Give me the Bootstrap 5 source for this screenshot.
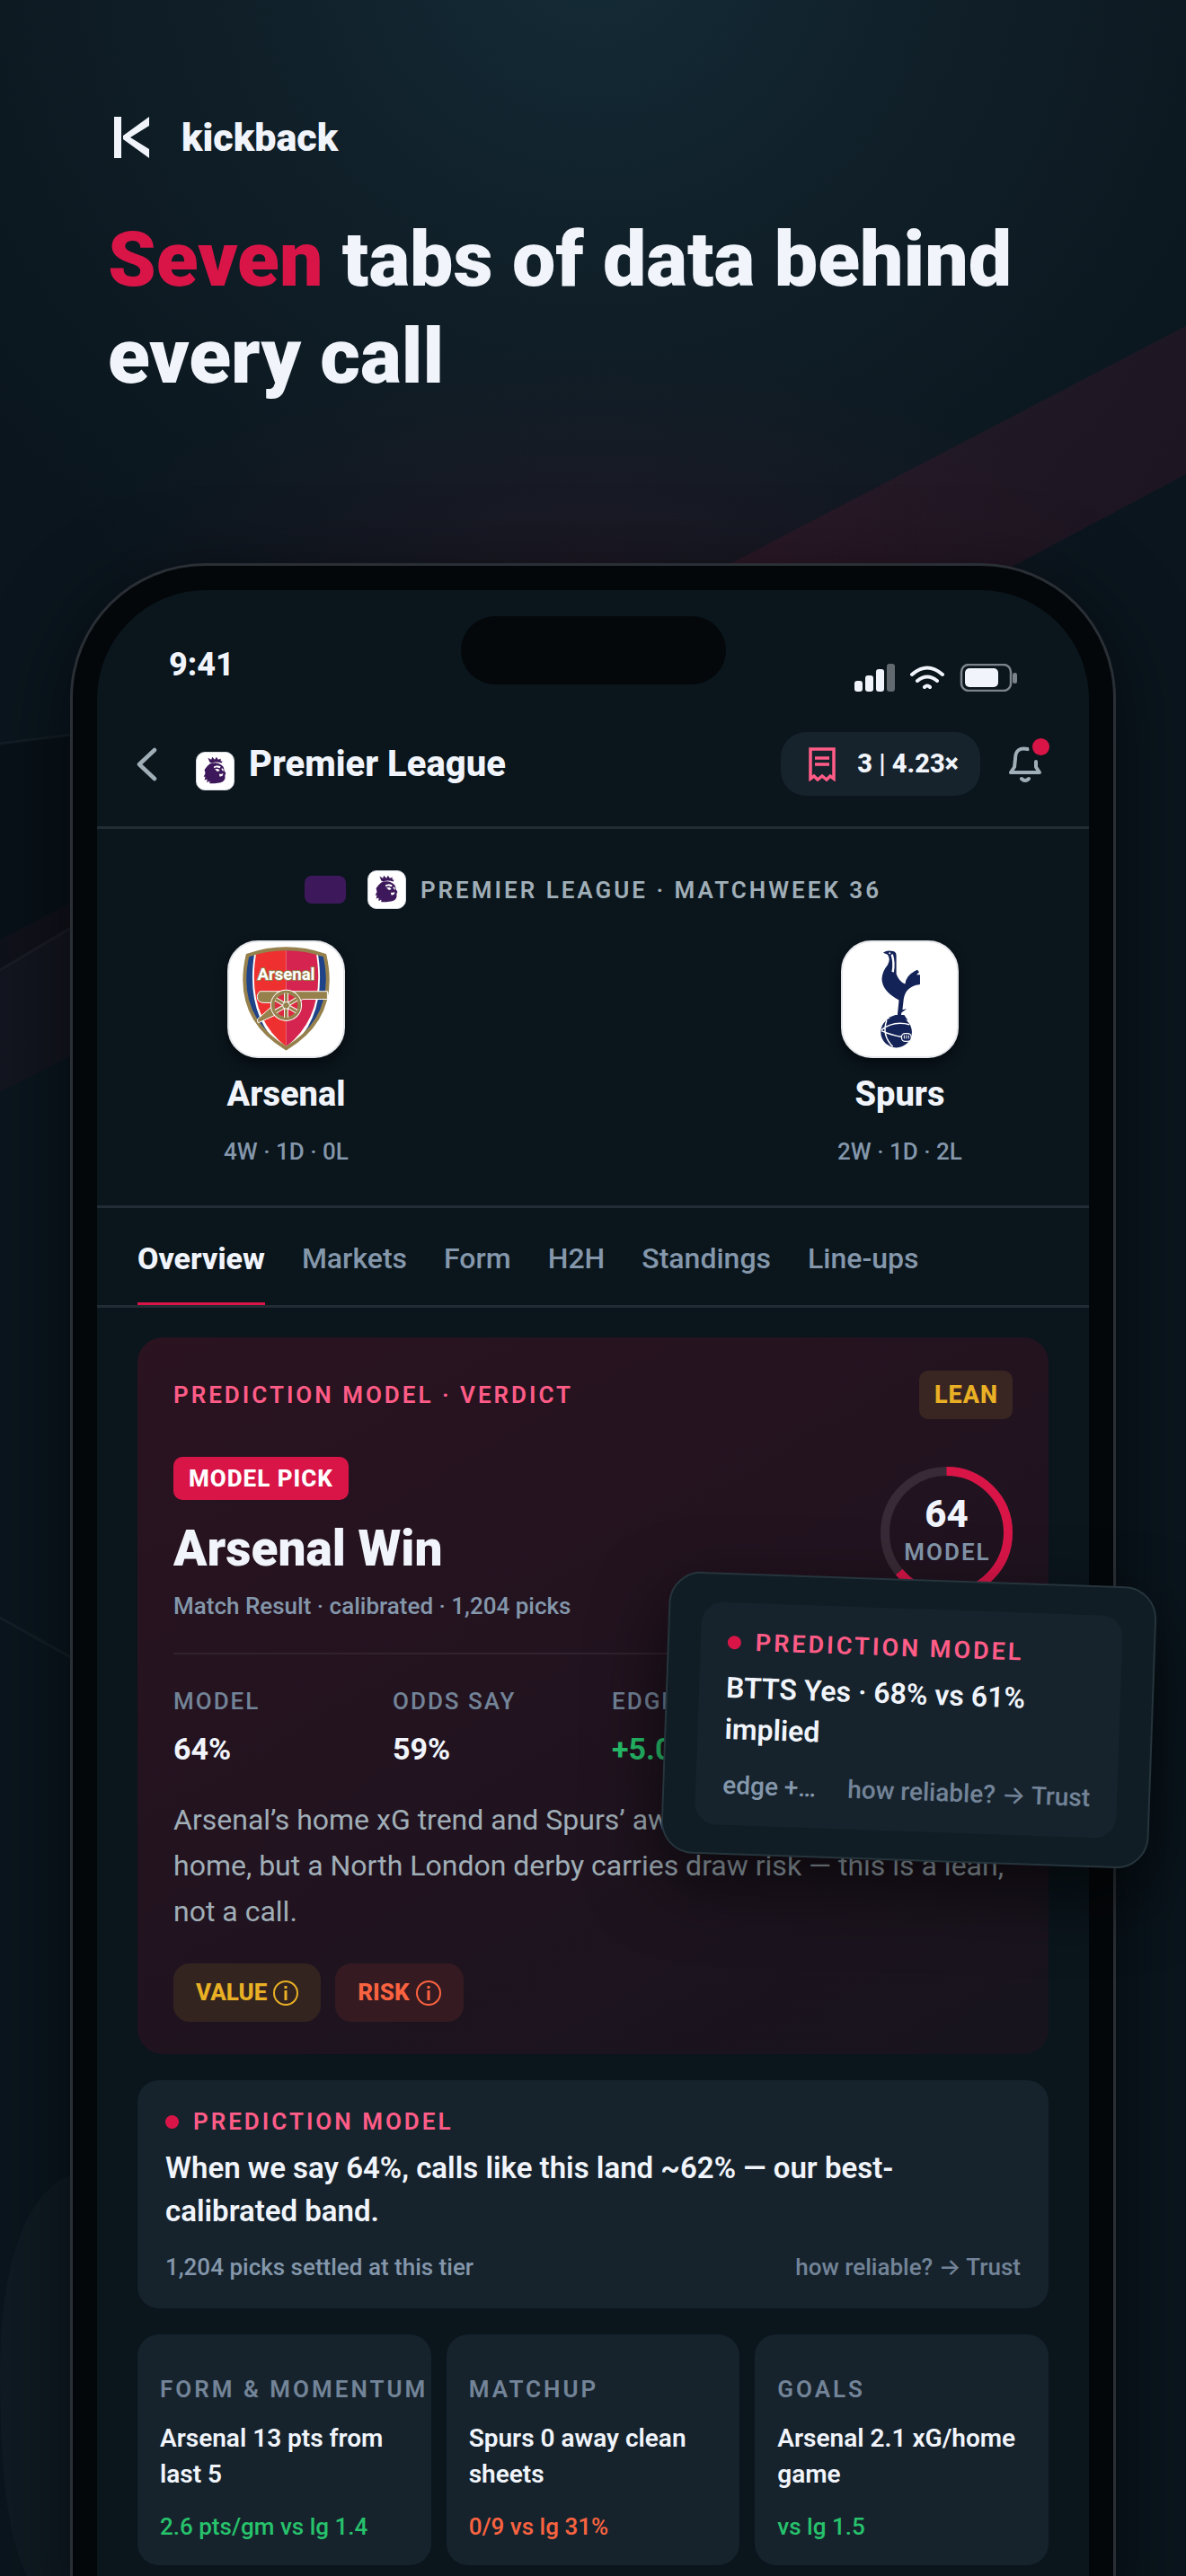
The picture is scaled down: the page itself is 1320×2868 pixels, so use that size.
<!DOCTYPE html>
<html lang="en">
<head>
<meta charset="utf-8">
<meta name="viewport" content="width=device-width, initial-scale=1">
<title>kickback – Seven tabs of data behind every call</title>
<link href="https://cdn.jsdelivr.net/npm/bootstrap@5.3.0/dist/css/bootstrap.min.css" rel="stylesheet">
<style>
:root{--ink:#f1f5fb;--soft:#a0aeb7;--muted:#8497ab;--dim:#738498;--brand:#d91548;--pink:#ff5c87;--screen:#0a151c;--tile:#16232d;--rule:#212c34;--gold:#e9b025;--risk:#fb6340;--up:#27c26c}
body{height:100vh;overflow:hidden;background:#09121a;color:var(--ink);font-family:Roboto,Inter,"Liberation Sans",sans-serif}
.poster{position:relative;min-height:100vh;background:
 radial-gradient(560px 260px at 50% 640px,rgba(217,21,72,.08),transparent 100%),
 radial-gradient(900px 860px at 50% -60px,#142b37 0%,#101f28 45%,#0a151d 100%)}
.backdrop{position:absolute;inset:0 0 auto;width:100%;height:auto}
.hero,.phone{position:relative}
.hero{padding:126px 120px 0}
.brand{height:54px;gap:34px;padding-left:6px}
.wordmark{font-size:43px;font-weight:900;line-height:54px}
.headline{font-size:86px;font-weight:900;line-height:108px;margin:55px 0 0}
.headline span{color:var(--brand)}
.phone{margin:176px 78px 0;border:3px solid #2a2f36;border-bottom:0;border-radius:150px 150px 0 0;background:#04070a;padding:27px 27px 0;flex:1 0 auto;box-shadow:0 20px 90px rgba(0,0,0,.5)}
.screen{background:var(--screen);border-radius:121px 121px 0 0;height:100%}
.statusbar{display:grid;grid-template-columns:1fr auto 1fr;align-items:start;padding:29px 79px 11px 80px}
.clock{font-size:36px;font-weight:800;line-height:40px;margin-top:34px}
.island{width:295px;height:76px;border-radius:38px;background:#04080b}
.statusicons{margin-top:53px;gap:16px}
.topbar{padding:34px 45px 34px 44px;border-bottom:3px solid var(--rule)}
.plain{background:none;border:0;padding:0;display:block;position:relative}
.back{margin-right:42px}
.leaguechip{width:43px;height:43px;border-radius:10px;background:#fff;border:1px solid #d8dce2;flex:none}
.leaguename{font-size:40px;font-weight:800;line-height:56px;margin:0}
.slip{height:71px;border:0;border-radius:28px;background:var(--tile);color:var(--ink);padding:0 24px 0 31px;gap:24px;font-size:29px;font-weight:800}
.reddot{position:absolute;width:19px;height:19px;border:0;border-radius:50%;background:var(--brand);top:-8px;right:-9px;box-shadow:0 0 0 4px var(--screen)}
.fixture{padding:46px 44px 42px;border-bottom:3px solid var(--rule)}
.caps{font-size:26px;line-height:36px;letter-spacing:3px;font-weight:600}
.swatch{width:46px;height:31px;border-radius:8px;background:#3d195b}
.sides{display:grid;grid-template-columns:1fr 350px 1fr;margin-top:35px}
.crest{width:131px;height:131px;border-radius:34px;background:#fff;border:2px solid #e6e8ec;box-shadow:0 6px 14px rgba(0,0,0,.45);display:block}
.sidename{font-size:38px;font-weight:800;line-height:48px;margin:16px 0 22px}
.fine{font-size:26px;line-height:36px;font-weight:500;color:var(--muted)}
.tabs{gap:41px;padding:0 45px;border-bottom:3px solid var(--rule)}
.tabs a{color:var(--muted);text-decoration:none;font-size:32px;line-height:48px;font-weight:500;padding:32px 0 25px;border-bottom:3px solid transparent}
.tabs a.active{color:var(--ink);font-size:34px;font-weight:800;border-color:var(--brand)}
.content{padding:33px 45px 60px}
.verdict{position:relative;border-radius:28px;padding:37px 40px 36px;background:linear-gradient(150deg,#2b1320 0%,#20131f 55%,#17141d 100%)}
.tag{border-radius:10px;font-weight:800;letter-spacing:1px}
.tag-lean{background:#392622;color:var(--gold);font-size:27px;line-height:54px;padding:0 16px 0 17px}
.tag-pick{background:var(--brand);color:#fff;font-size:26px;line-height:48px;padding:0 17px;display:inline-block}
.pickrow{margin-top:42px}
.picktitle{font-size:55px;font-weight:900;line-height:68px;margin:20px 0 12px}
.ring{position:relative;width:147px;height:147px;margin-top:11px}
.ring svg{display:block}
.ringtext{position:absolute;inset:29px 0 0}
.ringnum{font-size:42px;font-weight:800;line-height:48px}
.ringcap{font-size:26px;line-height:36px;letter-spacing:2px;font-weight:600;color:var(--muted);padding-left:2px}
.figures{display:grid;grid-template-columns:repeat(4,1fr);column-gap:42px;margin:34px 0 0;padding-top:36px;border-top:2px solid #30222e}
.figures dt{font-size:26px;line-height:32px;letter-spacing:2px;font-weight:500;color:var(--dim)}
.figures dd{font-size:34px;line-height:44px;font-weight:700;margin:15px 0 0}
.why{font-size:32px;line-height:51px;color:var(--soft);margin:32px 0}
.flag{height:65px;border:0;border-radius:18px;font-size:26px;font-weight:800;padding:0 25px;gap:7px}
.flag-value{background:#332420;color:var(--gold)}
.flag-risk{background:#351b21;color:var(--risk)}
.panel{background:var(--tile);border-radius:24px;padding:28px 31px;margin-top:29px}
.dot{width:15px;height:15px;border-radius:50%;background:var(--brand);flex:none}
.claim{font-size:33px;line-height:48px;font-weight:600;margin:10px 0 20px}
.more{color:var(--dim);text-decoration:none;white-space:nowrap}
.trio{display:grid;grid-template-columns:repeat(3,1fr);gap:17px;margin-top:29px}
.fact{background:var(--tile);border-radius:24px;padding:43px 25px 25px;overflow:hidden}
.fact h3{color:var(--dim);white-space:nowrap;margin:0}
.fact p{font-size:28px;line-height:40px;font-weight:600;margin:17px 0 20px}
.popout{position:absolute;top:269px;right:-116px;width:543px;padding:31px 35px;border:2px solid #26343c;border-radius:36px;background:#101d25;transform:rotate(2deg);box-shadow:0 30px 80px rgba(0,0,0,.6)}
.popout .panel{margin:0;padding:26px 30px}
.popout .claim{font-size:32px;line-height:46px;margin:10px 0 22px}
.popout .caps{font-size:27px}
.popout .fine{font-size:28px}
</style>
</head>
<body>
<main class="poster d-flex flex-column">
<svg class="backdrop" viewBox="0 0 1320 2868" aria-hidden="true">
 <defs><linearGradient id="beam" x1="1320" y1="0" x2="0" y2="0" gradientUnits="userSpaceOnUse"><stop offset="0" stop-color="#d91548" stop-opacity=".09"/><stop offset=".35" stop-color="#d91548" stop-opacity=".1"/><stop offset="1" stop-color="#d91548" stop-opacity=".04"/></linearGradient></defs>
 <path d="M1320 363 812 628 0 1046V1216L1132 628 1320 528Z" fill="url(#beam)"/>
 <path d="M0 828 80 818V1032L0 1080Z" fill="#000" opacity=".15"/>
 <path d="M0 828 80 818M0 1080 80 1032M0 1801 80 1846" stroke="#fff" stroke-opacity=".04" stroke-width="3" fill="none"/>
 <path d="M90 2418C30 2430 0 2520 0 2640S10 2830 30 2868H90Z" fill="#fff" opacity=".022"/>
</svg>
<header class="hero">
 <div class="brand d-flex align-items-center">
  <svg width="42" height="46" viewBox="0 0 42 46" fill="#f1f5fb" aria-hidden="true"><path d="M1 0h8v46H1zM40 0v10L19 23l21 13v10L11 25v-4z"/></svg>
  <span class="wordmark">kickback</span>
 </div>
 <h1 class="headline"><span>Seven</span> tabs of data behind every call</h1>
</header>

<section class="phone">
<div class="screen">
 <div class="statusbar">
  <div class="clock">9:41</div>
  <div class="island"></div>
  <div class="statusicons d-flex justify-content-end align-items-center">
   <svg width="45" height="31" viewBox="0 0 45 31" fill="#f1f5fb" aria-hidden="true"><rect y="19" width="9" height="12" rx="3"/><rect x="12" y="13" width="9" height="18" rx="3"/><rect x="24" y="6" width="9" height="25" rx="3"/><rect x="36" width="9" height="31" rx="3" opacity=".38"/></svg>
   <svg width="40" height="27" viewBox="0 0 40 27" fill="none" stroke="#f1f5fb" stroke-width="4" stroke-linecap="round" aria-hidden="true"><path d="M3 10Q20-5 37 10M9 17Q20 8 31 17M17 24Q20 21 23 24"/></svg>
   <svg width="65" height="31" viewBox="0 0 65 31" fill="none" aria-hidden="true"><rect x="2" y="1" width="55" height="29" rx="8" stroke="#7c838a" stroke-width="2.5"/><rect x="6" y="5" width="37" height="21" rx="5" fill="#f1f5fb"/><rect x="59" y="10" width="5" height="12" rx="2.5" fill="#7c838a"/></svg>
  </div>
 </div>

 <div class="topbar d-flex justify-content-between align-items-center">
  <div class="d-flex align-items-center">
   <button class="plain back" aria-label="Back"><svg width="24" height="38" viewBox="0 0 24 38" fill="none" stroke="#a0aeb7" stroke-width="4.5" stroke-linecap="round" stroke-linejoin="round" class="d-block"><path d="M20 3 3 19l17 16"/></svg></button>
   <svg class="leaguechip mt-3 me-3" viewBox="0 0 43 43" role="img" aria-label="Premier League crest"><g id="lion"><path fill="#3d195b" d="M15 11l-2-5 4 2 1-3 3 3 2-3 2 3 3-1 0 3 2 0-1 2q-6-2-12 0zM15 13q8-3 13 1 4 2 4 7l2 3-1 2 0 4q-1 4-5 5l-7 1-6 0 0-3-3 2 0-4-3 1 1-4-2 0 2-4-1-4 3-4z"/><path fill="#fff" d="M20 16l4-1 4 1-1 2-4-1-3 1zM21 19l4 0 2 2-3 1zM29 18l2 1 0 3-2-2zM26 25l3 0 2-1-1 3-3 1z"/></g></svg>
   <h2 class="leaguename">Premier League</h2>
  </div>
  <div class="d-flex align-items-center">
   <button class="slip d-flex align-items-center me-4">
    <svg width="30" height="38" viewBox="0 0 30 38" fill="none" stroke="#ff5c87" stroke-width="3.5" aria-hidden="true"><path d="M2 2h26v33l-4-3-4 4-5-4-5 4-4-4-4 3zM7 12h16M7 19h16"/></svg>
    <span>3 | 4.23×</span>
   </button>
   <button class="plain ms-2 me-2" aria-label="Notifications"><svg width="36" height="42" viewBox="0 0 36 42" fill="none" stroke="#a0aeb7" stroke-width="4" stroke-linecap="round" stroke-linejoin="round" class="d-block"><path d="M21 4Q7 1 7 15L6 24 2 30H34L30 24V18M14 37q4 4 8 0"/></svg><span class="reddot"></span></button>
  </div>
 </div>

 <div class="fixture">
  <div class="d-flex justify-content-center align-items-center">
   <span class="swatch"></span>
   <svg class="leaguechip ms-4 me-3" viewBox="0 0 43 43" aria-hidden="true"><use href="#lion"/></svg>
   <span class="caps" style="color:var(--soft)">PREMIER LEAGUE · MATCHWEEK 36</span>
  </div>
  <div class="sides text-center">
   <div class="d-flex flex-column align-items-center">
    <svg class="crest" viewBox="0 0 130 130" role="img" aria-label="Arsenal crest">
     <defs><clipPath id="shield"><path d="M21 15Q65 0 109 15 125 85 65 121 5 85 21 15z"/></clipPath></defs>
     <g clip-path="url(#shield)"><path fill="#1f4389" d="M0 0h130v130H0z"/><path fill="#fff" d="M30 6H100Q115 85 65 125 15 85 30 6z"/><path fill="#ee3130" d="M32 6H65V119Q17 82 32 6z"/><path fill="#d4244f" d="M65 6H98Q113 82 65 119z"/></g>
     <path d="M21 15Q65 0 109 15 125 85 65 121 5 85 21 15z" fill="none" stroke="#96814d" stroke-width="4"/>
     <g stroke="#fff" stroke-width="1" fill="#96814d"><path d="M35 56H112V65H84L78 69H40Q32 69 32 62q0-3 3-6z"/><path d="M50 72L32 88l1 4 22-10z"/></g>
     <circle cx="65" cy="72" r="18" fill="#fff"/><circle cx="65" cy="72" r="15" fill="#dc2a40" stroke="#96814d" stroke-width="4"/>
     <path d="M65 58V86M53 65 77 79M53 79 77 65" stroke="#fff" stroke-width="5"/><path d="M65 58V86M53 65 77 79M53 79 77 65" stroke="#96814d" stroke-width="3"/><circle cx="65" cy="72" r="4" fill="#96814d" stroke="#fff"/>
     <text x="65" y="43" text-anchor="middle" font-family="Roboto,sans-serif" font-weight="700" font-size="19" fill="#fff" stroke="#96814d" stroke-width="2" paint-order="stroke">Arsenal</text>
    </svg>
    <h3 class="sidename">Arsenal</h3>
    <div class="fine">4W · 1D · 0L</div>
   </div>
   <div></div>
   <div class="d-flex flex-column align-items-center">
    <svg class="crest" viewBox="0 0 130 130" role="img" aria-label="Spurs crest">
     <path fill="#132257" d="M46 12Q50 9 55 10 61 10 61 15V36Q64 45 71 47.500 72 37 85 31.500L87 34 84 37 88 37 88 48Q70 50 69 68L68 77 73 76 67 80 66 86H62L64 66Q45 56 44.500 42 45 33 51 26 55 19 51 14z"/>
     <path fill="none" stroke="#fff" stroke-width="2.500" d="M56 14Q59 24 57 34"/><circle cx="53.500" cy="12.500" r="1" fill="#fff"/>
     <circle cx="61" cy="102.500" r="17.700" fill="#132257"/><path fill="#132257" d="M52 86l8-3h10l4 6z"/>
     <path fill="none" stroke="#fff" stroke-width="1.500" d="M44 100Q58 89 76 94M50 89Q44 106 57 119M44 101Q55 106 68 108"/>
     <rect x="67" y="104" width="11" height="9" rx="4" fill="#132257" stroke="#fff" stroke-width="1.300"/><path stroke="#fff" d="M70 106v4M72.500 106v4M75 106v4"/>
    </svg>
    <h3 class="sidename">Spurs</h3>
    <div class="fine">2W · 1D · 2L</div>
   </div>
  </div>
 </div>

 <nav class="tabs d-flex" aria-label="Match">
  <a href="#overview" class="active" aria-current="page">Overview</a><a href="#markets">Markets</a><a href="#form">Form</a><a href="#h2h">H2H</a><a href="#standings">Standings</a><a href="#lineups">Line-ups</a>
 </nav>

 <div class="content" id="overview">
  <article class="verdict">
   <div class="d-flex justify-content-between align-items-center">
    <span class="caps" style="color:var(--pink)">PREDICTION MODEL · VERDICT</span>
    <span class="tag tag-lean">LEAN</span>
   </div>
   <div class="pickrow d-flex justify-content-between align-items-start">
    <div>
     <span class="tag tag-pick d-table">MODEL PICK</span>
     <h2 class="picktitle">Arsenal Win</h2>
     <div class="fine">Match Result · calibrated · 1,204 picks</div>
    </div>
    <div class="ring">
     <svg width="147" height="147" viewBox="0 0 147 147" fill="none" stroke-width="10" aria-hidden="true"><circle cx="73.500" cy="73.500" r="68.500" stroke="#382a36"/><circle cx="73.500" cy="73.500" r="68.500" stroke="#d91548" pathLength="100" stroke-dasharray="64 36" transform="rotate(-90 73.500 73.500)"/></svg>
     <div class="ringtext text-center"><div class="ringnum">64</div><div class="ringcap">MODEL</div></div>
    </div>
   </div>
   <dl class="figures">
    <div><dt>MODEL</dt><dd>64%</dd></div>
    <div><dt>ODDS SAY</dt><dd>59%</dd></div>
    <div><dt>EDGE</dt><dd style="color:var(--up)">+5.0%</dd></div>
   </dl>
   <p class="why">Arsenal’s home xG trend and Spurs’ away defending favour the home, but a North London derby carries draw risk — this is a lean, not a call.</p>
   <div class="d-flex gap-3">
    <button class="flag flag-value d-flex align-items-center">VALUE <svg width="28" height="28" viewBox="0 0 28 28" fill="none" stroke="currentColor" stroke-width="2" aria-hidden="true"><circle cx="14" cy="14" r="13"/><path d="M14 11v11M14 6v3" stroke-width="3"/></svg></button>
    <button class="flag flag-risk d-flex align-items-center">RISK <svg width="28" height="28" viewBox="0 0 28 28" fill="none" stroke="currentColor" stroke-width="2" aria-hidden="true"><circle cx="14" cy="14" r="13"/><path d="M14 11v11M14 6v3" stroke-width="3"/></svg></button>
   </div>
   <aside class="popout">
    <div class="panel">
     <div class="d-flex align-items-center gap-3"><span class="dot"></span><span class="caps" style="color:var(--pink)">PREDICTION MODEL</span></div>
     <p class="claim">BTTS Yes · 68% vs 61% implied</p>
     <div class="fine d-flex justify-content-between"><span>edge +…</span><a href="#trust" class="more">how reliable? → Trust</a></div>
    </div>
   </aside>
  </article>

  <article class="panel">
   <div class="d-flex align-items-center gap-3"><span class="dot"></span><span class="caps" style="color:var(--pink)">PREDICTION MODEL</span></div>
   <p class="claim">When we say 64%, calls like this land ~62% — our best-calibrated band.</p>
   <div class="fine d-flex justify-content-between"><span>1,204 picks settled at this tier</span><a href="#trust" class="more">how reliable? → Trust</a></div>
  </article>

  <div class="trio">
   <article class="fact"><h3 class="caps">FORM &amp; MOMENTUM</h3><p>Arsenal 13 pts from last 5</p><div class="fine" style="color:var(--up)">2.6 pts/gm vs lg 1.4</div></article>
   <article class="fact"><h3 class="caps">MATCHUP</h3><p>Spurs 0 away clean sheets</p><div class="fine" style="color:var(--risk)">0/9 vs lg 31%</div></article>
   <article class="fact"><h3 class="caps">GOALS</h3><p>Arsenal 2.1 xG/home game</p><div class="fine" style="color:var(--up)">vs lg 1.5</div></article>
  </div>
 </div>
</div>
</section>
</main>
<script src="https://cdn.jsdelivr.net/npm/bootstrap@5.3.0/dist/js/bootstrap.bundle.min.js"></script>
</body>
</html>
